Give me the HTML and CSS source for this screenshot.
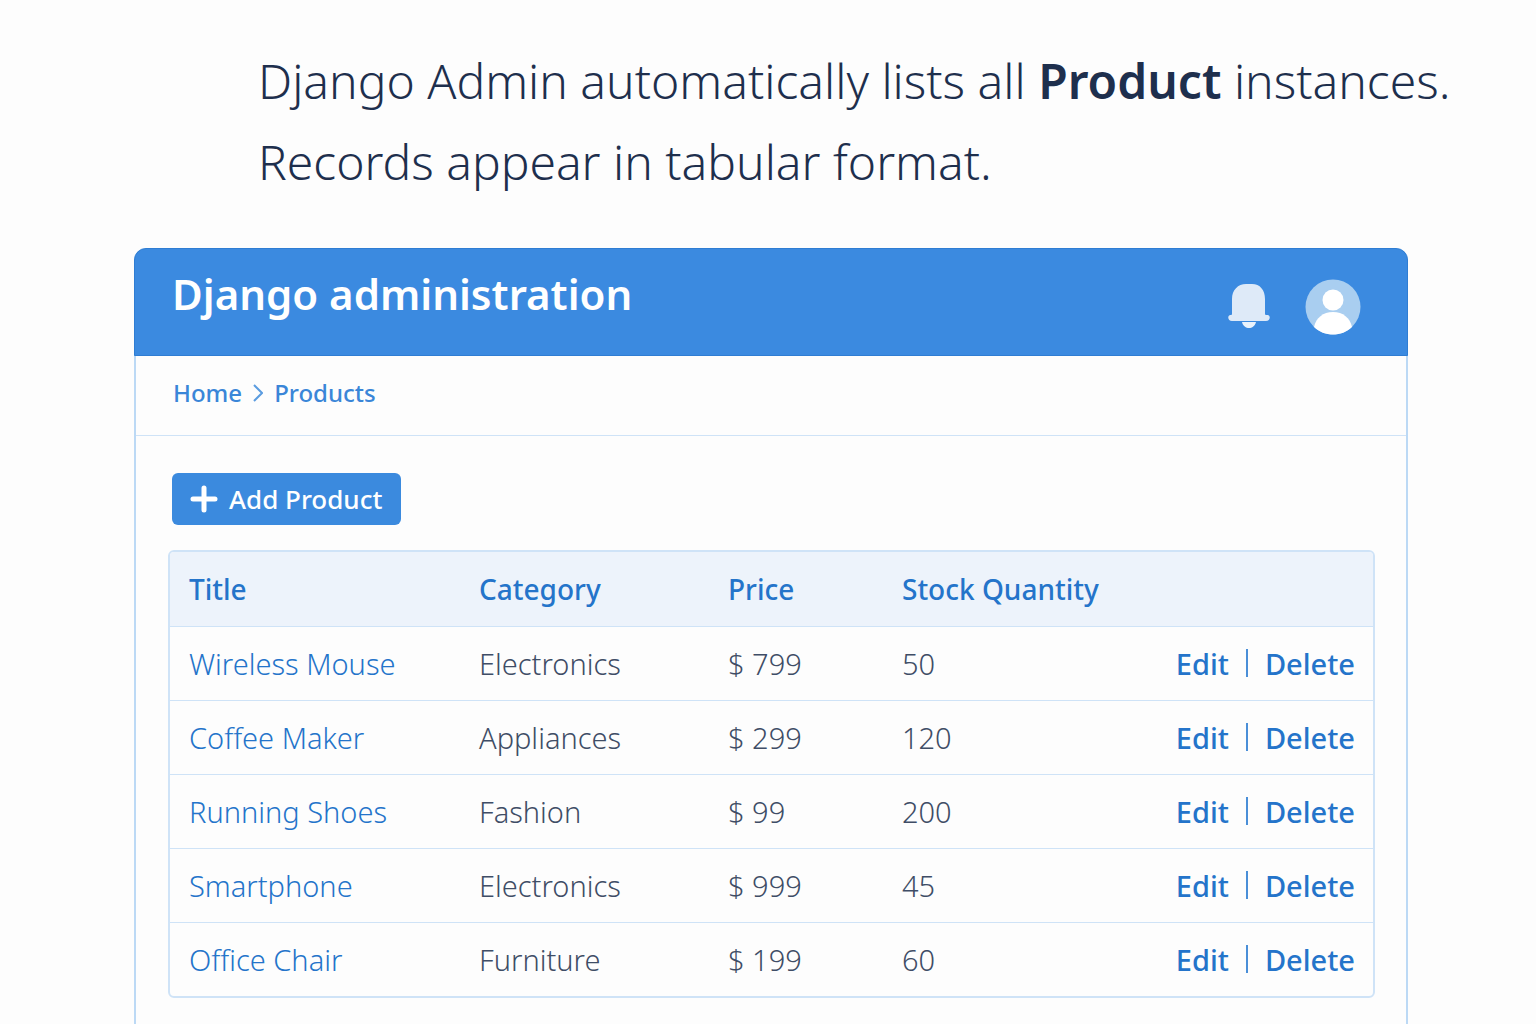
FILE: index.html
```html
<!DOCTYPE html>
<html lang="en">
<head>
  <meta charset="UTF-8">
  <meta name="viewport" content="width=device-width, initial-scale=1.0">
  <title>Products | Django administration</title>
  <link rel="stylesheet" href="styles.css">
</head>
<body>
  <div class="intro">
    <p>Django Admin automatically lists all <strong>Product</strong> instances.</p>
    <p>Records appear in tabular format.</p>
  </div>

  <div class="admin">
    <header class="header">
      <h1>Django administration</h1>
      <div class="header-actions">
        <button type="button" class="icon-button" aria-label="Notifications">
          <svg class="bell" viewBox="0 0 42 48" aria-hidden="true">
            <path d="M14 39h14c-1 4-4 6-7 6s-6-2-7-6z" fill="#eaf3fc"/>
            <path d="M4 31V16C4 7 10 1 18 1h6c8 0 13 6 13 15v15c0 1 1 1 3 1 3 1 2 6-2 6H4c-4 0-5-5-2-6 1 0 2 0 2-1z" fill="#deeaf8"/>
          </svg>
        </button>
        <button type="button" class="icon-button" aria-label="Account">
          <svg class="avatar" viewBox="0 0 56 56" aria-hidden="true">
            <circle cx="28" cy="28" r="27.500" fill="#a9cef0"/>
            <circle cx="28" cy="21" r="10.500" fill="#fff"/>
            <path d="M9 48c2-9 9-15 19-15s17 6 19 15c-5 5-12 7.500-19 7.500S14 53 9 48z" fill="#fff"/>
          </svg>
        </button>
      </div>
    </header>

    <nav class="breadcrumbs" aria-label="Breadcrumbs">
      <a href="#">Home</a>
      <svg class="chevron" viewBox="0 0 10 18" aria-hidden="true">
        <path d="M1 1l8 8-8 8"/>
      </svg>
      <a href="#">Products</a>
    </nav>

    <main class="content">
      <button type="button" class="add-button">
        <svg class="plus" viewBox="0 0 28 28" aria-hidden="true">
          <path d="M14 3v22M3 14h22"/>
        </svg>
        Add Product
      </button>

      <div class="table-wrap">
        <table class="products">
          <thead>
            <tr>
              <th class="col-title">Title</th>
              <th class="col-category">Category</th>
              <th class="col-price">Price</th>
              <th>Stock Quantity</th>
              <th class="col-actions" aria-label="Actions"></th>
            </tr>
          </thead>
          <tbody>
            <tr>
              <td><a href="#">Wireless Mouse</a></td>
              <td>Electronics</td>
              <td>$ 799</td>
              <td>50</td>
              <td><div class="row-actions"><a href="#">Edit</a><span class="divider"></span><a href="#">Delete</a></div></td>
            </tr>
            <tr>
              <td><a href="#">Coffee Maker</a></td>
              <td>Appliances</td>
              <td>$ 299</td>
              <td>120</td>
              <td><div class="row-actions"><a href="#">Edit</a><span class="divider"></span><a href="#">Delete</a></div></td>
            </tr>
            <tr>
              <td><a href="#">Running Shoes</a></td>
              <td>Fashion</td>
              <td>$ 99</td>
              <td>200</td>
              <td><div class="row-actions"><a href="#">Edit</a><span class="divider"></span><a href="#">Delete</a></div></td>
            </tr>
            <tr>
              <td><a href="#">Smartphone</a></td>
              <td>Electronics</td>
              <td>$ 999</td>
              <td>45</td>
              <td><div class="row-actions"><a href="#">Edit</a><span class="divider"></span><a href="#">Delete</a></div></td>
            </tr>
            <tr>
              <td><a href="#">Office Chair</a></td>
              <td>Furniture</td>
              <td>$ 199</td>
              <td>60</td>
              <td><div class="row-actions"><a href="#">Edit</a><span class="divider"></span><a href="#">Delete</a></div></td>
            </tr>
          </tbody>
        </table>
      </div>
    </main>
  </div>
</body>
</html>
```
FILE: styles.css
```css
* {
  box-sizing: border-box;
}

body {
  min-height: 100vh;
  margin: 0;
  padding: 0 128px 0 134px;
  display: flex;
  flex-direction: column;
  font-family: "Noto Sans", "Open Sans", sans-serif;
  background-color: #fdfdfd;
  color: #3f4d66;
}

a {
  color: inherit;
  text-decoration: none;
}

a:hover {
  text-decoration: underline;
}

button {
  border: none;
  font-family: inherit;
  cursor: pointer;
}

.intro {
  padding: 40px 0 46px 124px;
  font-size: 48px;
  font-weight: 300;
  line-height: 81px;
  color: #1e2f4d;
  white-space: nowrap;
}

.intro p {
  margin: 0;
}

.intro strong {
  font-weight: 600;
}

.admin {
  flex: 1;
  display: flex;
  flex-direction: column;
  border: 2px solid #bcd9f5;
  border-top: none;
  border-bottom: none;
  border-radius: 12px 12px 0 0;
}

.header {
  display: flex;
  align-items: flex-start;
  justify-content: space-between;
  height: 108px;
  margin: 0 -2px;
  padding: 17px 46px 0 37px;
  background-color: #3b8ae0;
  border: 1px solid #2f7dd3;
  border-radius: 12px 12px 0 0;
  color: #fff;
}

.header h1 {
  margin: 0;
  font-size: 42px;
  font-weight: 600;
  line-height: 56px;
}

.header-actions {
  display: flex;
  align-items: center;
  gap: 35px;
  padding-top: 13px;
}

.icon-button {
  display: flex;
  padding: 0;
  background: none;
}

.bell {
  width: 42px;
  height: 48px;
}

.avatar {
  width: 56px;
  height: 56px;
}

.breadcrumbs {
  display: flex;
  align-items: center;
  gap: 11px;
  height: 80px;
  padding: 0 37px 6px;
  border-bottom: 1px solid #cfe3f7;
  font-size: 24px;
  font-weight: 500;
  color: #3a86d8;
}

.chevron {
  width: 10px;
  height: 18px;
  fill: none;
  stroke: #5b9ce0;
  stroke-width: 2;
}

.content {
  padding: 37px 31px 27px 32px;
}

.add-button {
  display: flex;
  align-items: center;
  gap: 11px;
  height: 52px;
  margin: 0 0 25px 4px;
  padding: 0 19px 0 18px;
  background-color: #3b8ade;
  border-radius: 6px;
  font-size: 26px;
  font-weight: 500;
  color: #fff;
}

.add-button:hover {
  background-color: #2f7dd3;
}

.plus {
  width: 28px;
  height: 28px;
  fill: none;
  stroke: #fff;
  stroke-width: 5;
  stroke-linecap: round;
}

.table-wrap {
  border: 2px solid #cfe3f7;
  border-radius: 6px;
  overflow: hidden;
}

.products {
  width: 100%;
  border-collapse: collapse;
  table-layout: fixed;
}

.products th,
.products td {
  height: 74px;
  padding: 0 0 0 19px;
  text-align: left;
  white-space: nowrap;
}

.products th {
  background-color: #edf3fb;
  font-size: 28px;
  font-weight: 500;
  color: #2474ca;
}

.products td {
  border-top: 1px solid #cfe3f7;
  font-size: 29px;
  font-weight: 300;
}

.products td a {
  color: #2474ca;
}

.products .col-title {
  width: 290px;
}

.products .col-category {
  width: 249px;
}

.products .col-price {
  width: 174px;
}

.col-actions {
  width: 20%;
}

.row-actions {
  display: flex;
  align-items: center;
  justify-content: flex-end;
  gap: 17px;
  padding-right: 18px;
  font-weight: 500;
}

.divider {
  width: 2px;
  height: 28px;
  background-color: #4a8fd8;
}
```
